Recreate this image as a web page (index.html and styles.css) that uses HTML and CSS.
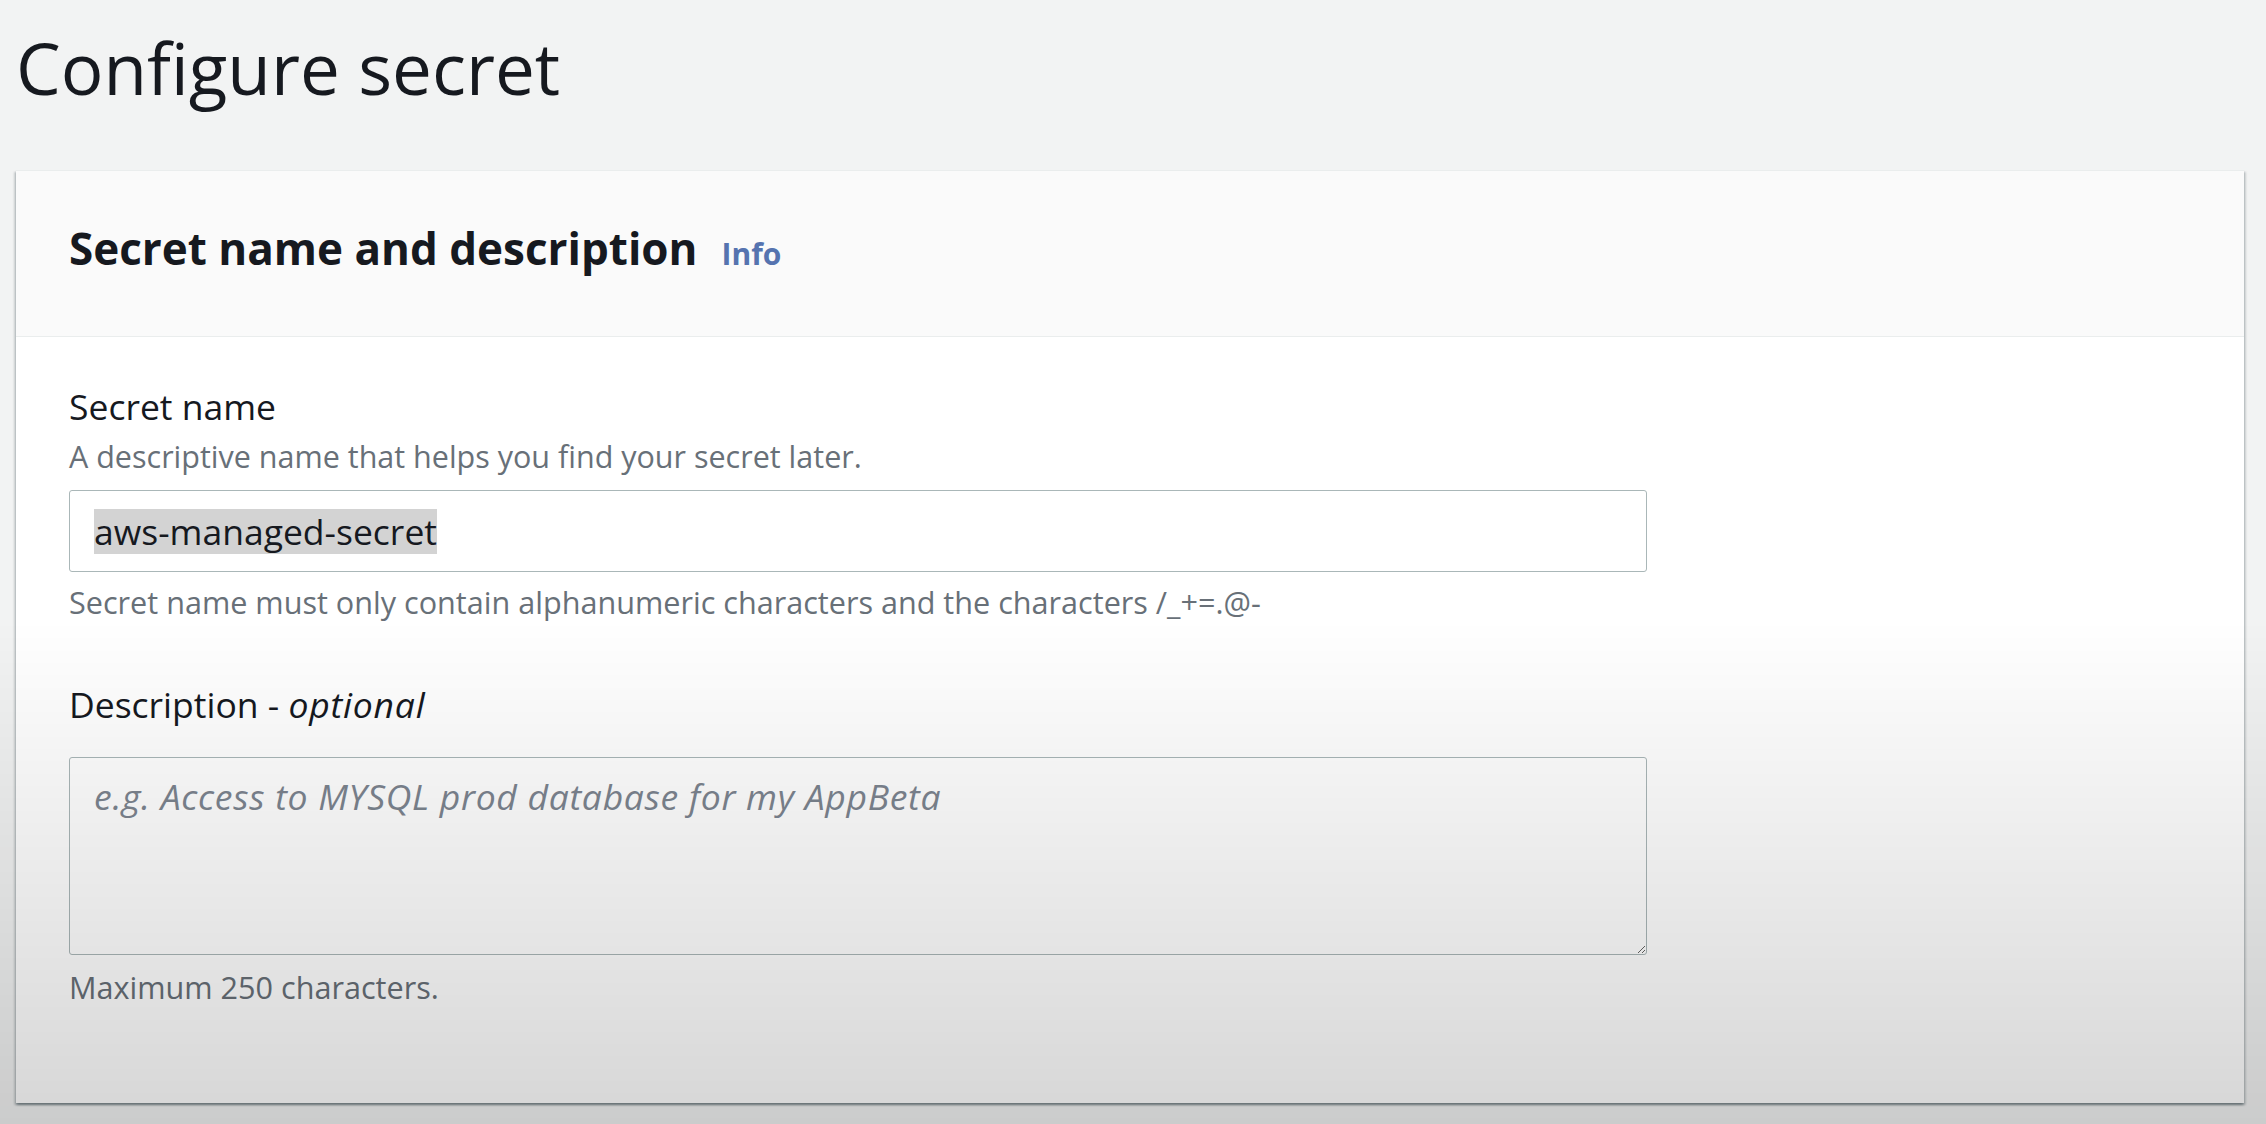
FILE: index.html
```html
<!DOCTYPE html>
<html lang="en">
<head>
<meta charset="utf-8">
<title>Configure secret</title>
<link rel="stylesheet" href="styles.css">
</head>
<body>
<main class="page">
  <h1 class="page-title">Configure secret</h1>
  <section class="container">
    <header class="container-header">
      <h2 class="container-title">Secret name and description<a class="info-link" href="#">Info</a></h2>
    </header>
    <div class="container-body">
      <div class="field">
        <span class="field-label">Secret name</span>
        <p class="field-desc">A descriptive name that helps you find your secret later.</p>
        <div class="text-input"><span class="selected">aws-managed-secret</span></div>
        <p class="field-constraint">Secret name must only contain alphanumeric characters and the characters /_+=.@-</p>
      </div>
      <div class="field field-second">
        <label class="field-label" for="secret-desc">Description - <i class="optional">optional</i></label>
        <textarea class="text-area" id="secret-desc" placeholder="e.g. Access to MYSQL prod database for my AppBeta"></textarea>
        <p class="field-constraint field-constraint-last">Maximum 250 characters.</p>
      </div>
    </div>
  </section>
</main>
</body>
</html>
```

FILE: styles.css
```css
* { box-sizing: border-box; }
html, body { margin: 0; padding: 0; }
body {
  background: #f2f3f3;
  font-family: "Open Sans", "Noto Sans", "Liberation Sans", sans-serif;
  color: #16191f;
  min-height: 1124px;
}
body::after {
  content: "";
  position: fixed;
  inset: 0;
  pointer-events: none;
  background: linear-gradient(to bottom, rgba(0,0,0,0) 0, rgba(0,0,0,0) 620px, rgba(0,0,0,0.16) 1124px);
}
.page {
  padding: 26px 22px 0 16px;
}
.page-title {
  margin: 0;
  font-size: 71px;
  line-height: 84px;
  font-weight: 400;
  color: #16191f;
}
.container {
  margin-top: 60px;
  background: #ffffff;
  border-top: 1px solid #eaeded;
  box-shadow: 0 2px 2px 0 rgba(0,28,36,.3), 2px 2px 2px 0 rgba(0,28,36,.15), -2px 2px 2px 0 rgba(0,28,36,.15);
}
.container-header {
  background: #fafafa;
  border-bottom: 1px solid #eaeded;
  padding: 49px 53px 60px;
}
.container-title {
  margin: 0;
  font-size: 44px;
  line-height: 56px;
  font-weight: 700;
  color: #16191f;
}
.info-link {
  margin-left: 24px;
  font-size: 30px;
  line-height: 30px;
  font-weight: 700;
  color: #5573af;
  text-decoration: none;
}
.container-body {
  padding: 45px 53px 95px;
}
.field-label {
  display: block;
  font-size: 35.5px;
  line-height: 48px;
  color: #16191f;
}
.optional {
  letter-spacing: 0.8px;
}
.field-desc {
  margin: 5px 0 0;
  font-size: 30.5px;
  line-height: 42px;
  color: #687078;
}
.text-input {
  margin-top: 13px;
  width: 1578px;
  height: 82px;
  border: 1px solid #aab7b8;
  border-radius: 3px;
  background: #ffffff;
  padding: 0 24px;
  display: flex;
  align-items: center;
  font-size: 35.5px;
  color: #16191f;
}
.selected {
  display: inline-block;
  background: #d3d3d3;
  line-height: 45px;
}
.field-constraint {
  margin: 9px 0 0;
  font-size: 30.6px;
  line-height: 42px;
  color: #687078;
}
.field-second {
  margin-top: 57px;
}
.field-second .field-label {
  margin-bottom: 29px;
}
.text-area {
  display: block;
  width: 1578px;
  height: 198px;
  margin: 0;
  border: 1px solid #aab7b8;
  border-radius: 3px;
  background: #ffffff;
  padding: 14px 24px;
  font-family: "Open Sans", "Noto Sans", "Liberation Sans", sans-serif;
  font-size: 35.5px;
  line-height: 48px;
  color: #16191f;
  resize: vertical;
  outline: none;
}
.text-area::placeholder {
  color: #7d8590;
  font-style: italic;
  letter-spacing: 0.7px;
  opacity: 1;
}
.field-constraint-last {
  margin-top: 11px;
}
```
